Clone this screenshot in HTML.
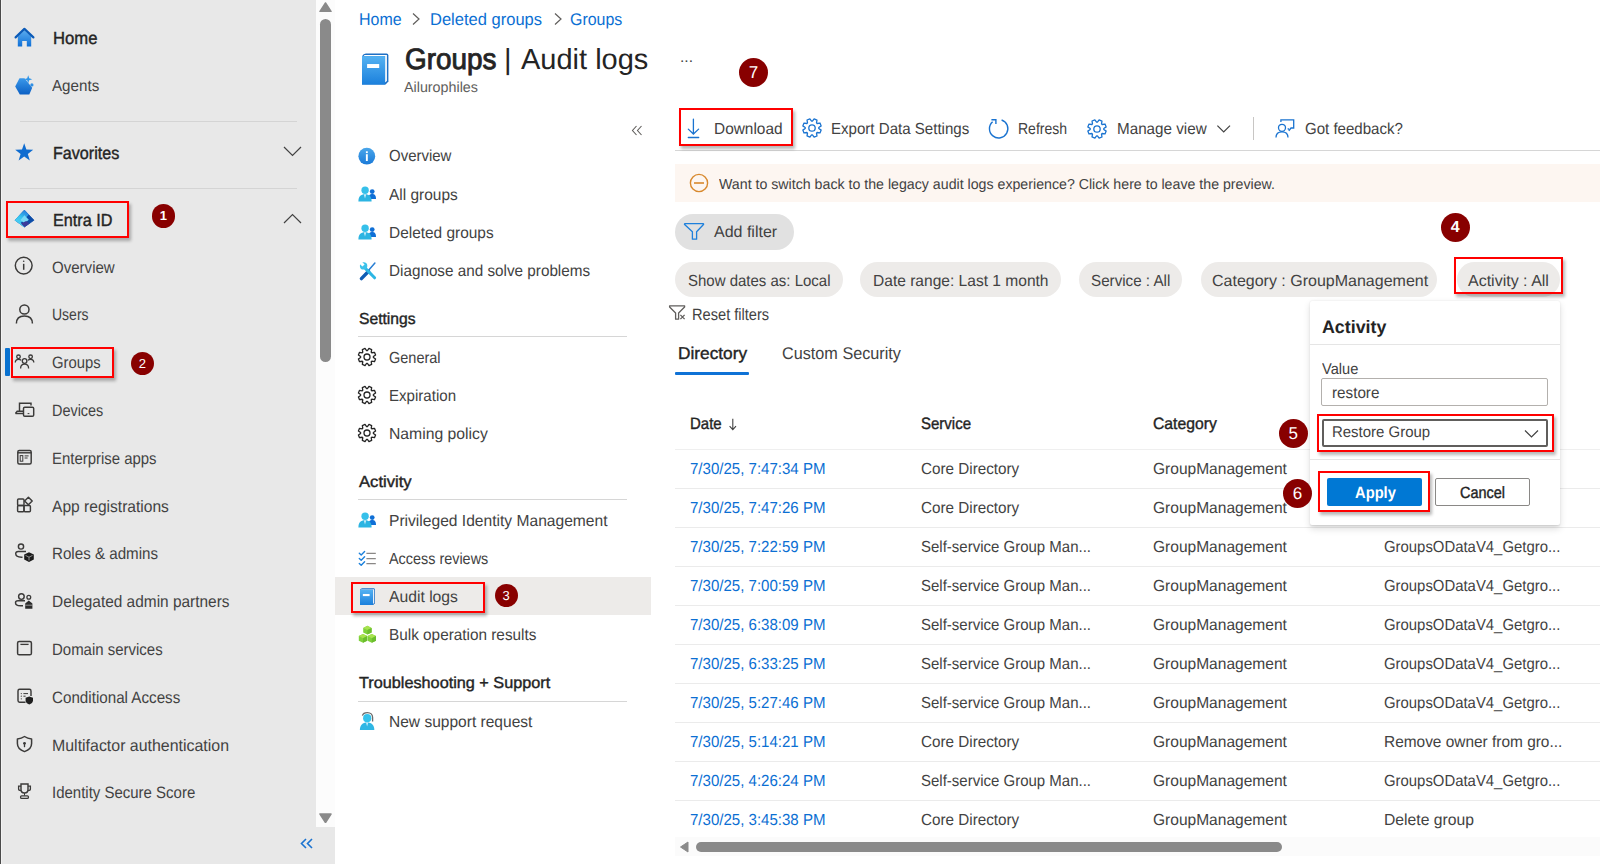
<!DOCTYPE html>
<html><head><meta charset="utf-8"><style>
html,body{margin:0;padding:0;width:1600px;height:864px;overflow:hidden;background:#fff;font-family:"Liberation Sans",sans-serif;text-rendering:geometricPrecision;}
.r{position:absolute;}
.t{position:absolute;white-space:nowrap;line-height:1;transform-origin:0 0;}
.badge{position:absolute;border-radius:50%;background:#880000;color:#fff;text-align:center;font-weight:normal;font-family:"Liberation Sans",sans-serif;}
.redbox{position:absolute;border:2px solid #ff0000;box-sizing:border-box;box-shadow:2px 3px 3px rgba(0,0,0,.28);}
</style></head><body>
<div class="r" style="left:0px;top:0px;width:316px;height:864px;background:#e8e8e8"></div>
<div class="r" style="left:316px;top:0px;width:19px;height:827px;background:#fcfcfc"></div>
<div class="r" style="left:316px;top:827px;width:19px;height:37px;background:#e8e8e8"></div>
<div class="r" style="left:0px;top:0px;width:1px;height:864px;background:#4b4b4b"></div>
<div class="r" style="left:1px;top:0px;width:1px;height:864px;background:#f3f3f3"></div>
<svg class="r" style="left:319px;top:2px" width="13" height="10" viewBox="0 0 13 10"><path d="M6.5 1 L12 9.5 L1 9.5 Z" fill="#8a8a8a" stroke="#8a8a8a" stroke-width="1.5" stroke-linejoin="round"/></svg>
<div class="r" style="left:320px;top:19px;width:11px;height:343px;background:#8a8a8a;border-radius:5.5px"></div>
<svg class="r" style="left:319px;top:813px" width="13" height="10" viewBox="0 0 13 10"><path d="M1 1 L12 1 L6.5 9.5 Z" fill="#8a8a8a" stroke="#8a8a8a" stroke-width="1.5" stroke-linejoin="round"/></svg>
<svg class="r" style="left:300px;top:838px" width="13" height="11" viewBox="0 0 13 11"><path d="M6 1 L1.5 5.5 L6 10 M12 1 L7.5 5.5 L12 10" fill="none" stroke="#1a73d0" stroke-width="1.6"/></svg>
<div class="r" style="left:20px;top:121px;width:277px;height:1px;background:#d4d4d4"></div>
<div class="r" style="left:20px;top:188px;width:277px;height:1px;background:#d4d4d4"></div>
<div class="t" style="left:52.5px;top:30.0px;font-size:17.5px;color:#242424;-webkit-text-stroke:0.4px #242424;transform:scaleX(0.951);">Home</div>
<div class="t" style="left:52.3px;top:79.0px;font-size:16px;color:#424242;transform:scaleX(0.948);">Agents</div>
<div class="t" style="left:52.7px;top:145.0px;font-size:17.5px;color:#242424;-webkit-text-stroke:0.4px #242424;transform:scaleX(0.921);">Favorites</div>
<div class="t" style="left:52.7px;top:212.0px;font-size:17.5px;color:#242424;-webkit-text-stroke:0.4px #242424;transform:scaleX(0.927);">Entra ID</div>
<div class="t" style="left:52.4px;top:260.0px;font-size:16.5px;color:#424242;transform:scaleX(0.912);">Overview</div>
<div class="t" style="left:52.4px;top:307.0px;font-size:16.5px;color:#424242;transform:scaleX(0.849);">Users</div>
<div class="t" style="left:52.4px;top:355.0px;font-size:16.5px;color:#424242;transform:scaleX(0.898);">Groups</div>
<div class="t" style="left:52.4px;top:403.0px;font-size:16.5px;color:#424242;transform:scaleX(0.874);">Devices</div>
<div class="t" style="left:52.4px;top:451.0px;font-size:16.5px;color:#424242;transform:scaleX(0.905);">Enterprise apps</div>
<div class="t" style="left:52.4px;top:499.0px;font-size:16.5px;color:#424242;transform:scaleX(0.944);">App registrations</div>
<div class="t" style="left:52.4px;top:546.0px;font-size:16.5px;color:#424242;transform:scaleX(0.918);">Roles &amp; admins</div>
<div class="t" style="left:52.4px;top:594.0px;font-size:16.5px;color:#424242;transform:scaleX(0.935);">Delegated admin partners</div>
<div class="t" style="left:52.4px;top:642.0px;font-size:16.5px;color:#424242;transform:scaleX(0.907);">Domain services</div>
<div class="t" style="left:52.4px;top:690.0px;font-size:16.5px;color:#424242;transform:scaleX(0.920);">Conditional Access</div>
<div class="t" style="left:52.4px;top:738.0px;font-size:16.5px;color:#424242;transform:scaleX(0.965);">Multifactor authentication</div>
<div class="t" style="left:52.4px;top:785.0px;font-size:16.5px;color:#424242;transform:scaleX(0.908);">Identity Secure Score</div>
<svg class="r" style="left:283px;top:146px" width="19" height="11" viewBox="0 0 19 11"><path d="M1 1 L9.5 9.5 L18 1" fill="none" stroke="#424242" stroke-width="1.2"/></svg>
<svg class="r" style="left:283px;top:213px" width="19" height="11" viewBox="0 0 19 11"><path d="M1 10 L9.5 1.5 L18 10" fill="none" stroke="#424242" stroke-width="1.2"/></svg>
<div class="r" style="left:5px;top:348px;width:5px;height:28px;background:#0a72d0;border-radius:1px"></div>
<div class="r" style="left:335px;top:577px;width:316px;height:38px;background:#edebe9"></div>
<div class="t" style="left:359.4px;top:11.0px;font-size:17px;color:#0b6fd3;transform:scaleX(0.939);">Home</div>
<div class="t" style="left:430.4px;top:11.0px;font-size:17px;color:#0b6fd3;transform:scaleX(0.972);">Deleted groups</div>
<div class="t" style="left:570.3px;top:11.0px;font-size:17px;color:#0b6fd3;transform:scaleX(0.938);">Groups</div>
<svg class="r" style="left:411px;top:12px" width="10" height="14" viewBox="0 0 10 14"><path d="M2 1.5 L8 7 L2 12.5" fill="none" stroke="#605e5c" stroke-width="1.2"/></svg>
<svg class="r" style="left:553px;top:12px" width="10" height="14" viewBox="0 0 10 14"><path d="M2 1.5 L8 7 L2 12.5" fill="none" stroke="#605e5c" stroke-width="1.2"/></svg>
<div class="t" style="left:404.8px;top:45.0px;font-size:29.5px;color:#242424;-webkit-text-stroke:0.9px #242424;transform:scaleX(0.945);">Groups</div>
<div class="t" style="left:504.0px;top:46.0px;font-size:29px;color:#242424;">|</div>
<div class="t" style="left:521.0px;top:46.0px;font-size:29px;color:#242424;">Audit logs</div>
<div class="t" style="left:404.0px;top:81.0px;font-size:14.5px;color:#605e5c;transform:scaleX(0.986);">Ailurophiles</div>
<div class="t" style="left:680.0px;top:50.0px;font-size:15px;color:#424242;transform:scaleX(1.040);">...</div>
<svg class="r" style="left:631px;top:125px" width="12" height="11" viewBox="0 0 12 11"><path d="M5.5 1 L1.5 5.5 L5.5 10 M10.5 1 L6.5 5.5 L10.5 10" fill="none" stroke="#605e5c" stroke-width="1.1"/></svg>
<div class="t" style="left:388.9px;top:149.0px;font-size:16px;color:#424242;transform:scaleX(0.936);">Overview</div>
<div class="t" style="left:388.9px;top:188.0px;font-size:16px;color:#424242;transform:scaleX(0.966);">All groups</div>
<div class="t" style="left:388.9px;top:226.0px;font-size:16px;color:#424242;transform:scaleX(0.964);">Deleted groups</div>
<div class="t" style="left:388.9px;top:264.0px;font-size:16px;color:#424242;transform:scaleX(0.954);">Diagnose and solve problems</div>
<div class="t" style="left:388.9px;top:351.0px;font-size:16px;color:#424242;transform:scaleX(0.906);">General</div>
<div class="t" style="left:388.9px;top:389.0px;font-size:16px;color:#424242;transform:scaleX(0.942);">Expiration</div>
<div class="t" style="left:388.9px;top:427.0px;font-size:16px;color:#424242;transform:scaleX(0.983);">Naming policy</div>
<div class="t" style="left:388.9px;top:514.0px;font-size:16px;color:#424242;transform:scaleX(0.975);">Privileged Identity Management</div>
<div class="t" style="left:388.9px;top:552.0px;font-size:16px;color:#424242;transform:scaleX(0.900);">Access reviews</div>
<div class="t" style="left:388.9px;top:590.0px;font-size:16px;color:#424242;transform:scaleX(0.981);">Audit logs</div>
<div class="t" style="left:388.9px;top:628.0px;font-size:16px;color:#424242;transform:scaleX(0.958);">Bulk operation results</div>
<div class="t" style="left:388.9px;top:715.0px;font-size:16px;color:#424242;transform:scaleX(0.971);">New support request</div>
<div class="t" style="left:358.7px;top:312.0px;font-size:16px;color:#242424;-webkit-text-stroke:0.4px #242424;transform:scaleX(0.979);">Settings</div>
<div class="t" style="left:358.7px;top:475.0px;font-size:16px;color:#242424;-webkit-text-stroke:0.4px #242424;transform:scaleX(1.038);">Activity</div>
<div class="t" style="left:358.7px;top:676.0px;font-size:16px;color:#242424;-webkit-text-stroke:0.4px #242424;transform:scaleX(1.015);">Troubleshooting + Support</div>
<div class="r" style="left:358px;top:336px;width:269px;height:1px;background:#d6d6d6"></div>
<div class="r" style="left:358px;top:499px;width:269px;height:1px;background:#d6d6d6"></div>
<div class="r" style="left:358px;top:701px;width:269px;height:1px;background:#d6d6d6"></div>
<div class="r" style="left:675px;top:150px;width:925px;height:1px;background:#d6d6d6"></div>
<div class="t" style="left:714.3px;top:122.0px;font-size:16px;color:#424242;transform:scaleX(0.963);">Download</div>
<div class="t" style="left:831.3px;top:122.0px;font-size:16px;color:#424242;transform:scaleX(0.942);">Export Data Settings</div>
<div class="t" style="left:1018.4px;top:122.0px;font-size:16px;color:#424242;transform:scaleX(0.876);">Refresh</div>
<div class="t" style="left:1117.2px;top:122.0px;font-size:16px;color:#424242;transform:scaleX(0.951);">Manage view</div>
<div class="t" style="left:1304.6px;top:122.0px;font-size:16px;color:#424242;transform:scaleX(0.940);">Got feedback?</div>
<div class="r" style="left:1253px;top:117px;width:1px;height:23px;background:#c8c6c4"></div>
<div class="r" style="left:675px;top:164px;width:925px;height:38px;background:#fdf6f1"></div>
<div class="t" style="left:719.0px;top:178.0px;font-size:14.5px;color:#424242;transform:scaleX(0.978);">Want to switch back to the legacy audit logs experience? Click here to leave the preview.</div>
<svg class="r" style="left:689px;top:173px" width="20" height="20" viewBox="0 0 20 20"><circle cx="10" cy="10" r="8.6" fill="none" stroke="#d8892e" stroke-width="1.4"/><path d="M5 10 H15" stroke="#d8892e" stroke-width="1.6"/></svg>
<div class="r" style="left:675px;top:214px;width:119px;height:36px;background:#e1e1e1;border-radius:18px"></div>
<div class="t" style="left:714.0px;top:225.0px;font-size:16px;color:#424242;">Add filter</div>
<div class="r" style="left:675px;top:262px;width:168px;height:35px;background:#edebe9;border-radius:17.5px"></div>
<div class="t" style="left:687.6px;top:274.0px;font-size:16px;color:#424242;transform:scaleX(0.937);">Show dates as: Local</div>
<div class="r" style="left:860px;top:262px;width:201px;height:35px;background:#edebe9;border-radius:17.5px"></div>
<div class="t" style="left:873.2px;top:274.0px;font-size:16px;color:#424242;transform:scaleX(0.972);">Date range: Last 1 month</div>
<div class="r" style="left:1079px;top:262px;width:103px;height:35px;background:#edebe9;border-radius:17.5px"></div>
<div class="t" style="left:1090.9px;top:274.0px;font-size:16px;color:#424242;transform:scaleX(0.949);">Service : All</div>
<div class="r" style="left:1201px;top:262px;width:236px;height:35px;background:#edebe9;border-radius:17.5px"></div>
<div class="t" style="left:1212.0px;top:274.0px;font-size:16px;color:#424242;">Category : GroupManagement</div>
<div class="r" style="left:1457px;top:262px;width:103px;height:35px;background:#edebe9;border-radius:17.5px"></div>
<div class="t" style="left:1468.0px;top:274.0px;font-size:16px;color:#424242;">Activity : All</div>
<div class="t" style="left:691.6px;top:307.0px;font-size:16.5px;color:#424242;transform:scaleX(0.886);">Reset filters</div>
<div class="t" style="left:677.5px;top:345.0px;font-size:17px;color:#242424;-webkit-text-stroke:0.4px #242424;transform:scaleX(1.016);">Directory</div>
<div class="t" style="left:781.9px;top:345.0px;font-size:17px;color:#424242;transform:scaleX(0.954);">Custom Security</div>
<div class="r" style="left:675px;top:372px;width:74px;height:3px;background:#0f72d6;border-radius:1px"></div>
<div class="t" style="left:690.3px;top:416.0px;font-size:16.5px;color:#242424;-webkit-text-stroke:0.4px #242424;transform:scaleX(0.907);">Date</div>
<div class="t" style="left:921.3px;top:416.0px;font-size:16.5px;color:#242424;-webkit-text-stroke:0.4px #242424;transform:scaleX(0.909);">Service</div>
<div class="t" style="left:1152.5px;top:416.0px;font-size:16.5px;color:#242424;-webkit-text-stroke:0.4px #242424;transform:scaleX(0.953);">Category</div>
<svg class="r" style="left:726px;top:416px" width="14" height="16" viewBox="0 0 14 16"><path d="M6.8 2.8 V13.6 M3.6 10.2 L6.8 13.6 L10 10.2" fill="none" stroke="#424242" stroke-width="1.1"/></svg>
<div class="r" style="left:675px;top:449px;width:925px;height:1px;background:#efefef"></div>
<div class="t" style="left:690.3px;top:462.0px;font-size:16px;color:#0b6fd3;transform:scaleX(0.940);">7/30/25, 7:47:34 PM</div>
<div class="t" style="left:921.3px;top:462.0px;font-size:16px;color:#424242;transform:scaleX(0.952);">Core Directory</div>
<div class="t" style="left:1152.5px;top:462.0px;font-size:16px;color:#424242;transform:scaleX(0.971);">GroupManagement</div>
<div class="r" style="left:675px;top:488px;width:925px;height:1px;background:#ebebeb"></div>
<div class="t" style="left:690.3px;top:501.0px;font-size:16px;color:#0b6fd3;transform:scaleX(0.940);">7/30/25, 7:47:26 PM</div>
<div class="t" style="left:921.3px;top:501.0px;font-size:16px;color:#424242;transform:scaleX(0.952);">Core Directory</div>
<div class="t" style="left:1152.5px;top:501.0px;font-size:16px;color:#424242;transform:scaleX(0.971);">GroupManagement</div>
<div class="r" style="left:675px;top:527px;width:925px;height:1px;background:#ebebeb"></div>
<div class="t" style="left:690.3px;top:540.0px;font-size:16px;color:#0b6fd3;transform:scaleX(0.940);">7/30/25, 7:22:59 PM</div>
<div class="t" style="left:921.3px;top:540.0px;font-size:16px;color:#424242;transform:scaleX(0.937);">Self-service Group Man...</div>
<div class="t" style="left:1152.5px;top:540.0px;font-size:16px;color:#424242;transform:scaleX(0.971);">GroupManagement</div>
<div class="t" style="left:1383.5px;top:540.0px;font-size:16px;color:#424242;transform:scaleX(0.931);">GroupsODataV4_Getgro...</div>
<div class="r" style="left:675px;top:566px;width:925px;height:1px;background:#ebebeb"></div>
<div class="t" style="left:690.3px;top:579.0px;font-size:16px;color:#0b6fd3;transform:scaleX(0.940);">7/30/25, 7:00:59 PM</div>
<div class="t" style="left:921.3px;top:579.0px;font-size:16px;color:#424242;transform:scaleX(0.937);">Self-service Group Man...</div>
<div class="t" style="left:1152.5px;top:579.0px;font-size:16px;color:#424242;transform:scaleX(0.971);">GroupManagement</div>
<div class="t" style="left:1383.5px;top:579.0px;font-size:16px;color:#424242;transform:scaleX(0.931);">GroupsODataV4_Getgro...</div>
<div class="r" style="left:675px;top:605px;width:925px;height:1px;background:#ebebeb"></div>
<div class="t" style="left:690.3px;top:618.0px;font-size:16px;color:#0b6fd3;transform:scaleX(0.940);">7/30/25, 6:38:09 PM</div>
<div class="t" style="left:921.3px;top:618.0px;font-size:16px;color:#424242;transform:scaleX(0.937);">Self-service Group Man...</div>
<div class="t" style="left:1152.5px;top:618.0px;font-size:16px;color:#424242;transform:scaleX(0.971);">GroupManagement</div>
<div class="t" style="left:1383.5px;top:618.0px;font-size:16px;color:#424242;transform:scaleX(0.931);">GroupsODataV4_Getgro...</div>
<div class="r" style="left:675px;top:644px;width:925px;height:1px;background:#ebebeb"></div>
<div class="t" style="left:690.3px;top:657.0px;font-size:16px;color:#0b6fd3;transform:scaleX(0.940);">7/30/25, 6:33:25 PM</div>
<div class="t" style="left:921.3px;top:657.0px;font-size:16px;color:#424242;transform:scaleX(0.937);">Self-service Group Man...</div>
<div class="t" style="left:1152.5px;top:657.0px;font-size:16px;color:#424242;transform:scaleX(0.971);">GroupManagement</div>
<div class="t" style="left:1383.5px;top:657.0px;font-size:16px;color:#424242;transform:scaleX(0.931);">GroupsODataV4_Getgro...</div>
<div class="r" style="left:675px;top:683px;width:925px;height:1px;background:#ebebeb"></div>
<div class="t" style="left:690.3px;top:696.0px;font-size:16px;color:#0b6fd3;transform:scaleX(0.940);">7/30/25, 5:27:46 PM</div>
<div class="t" style="left:921.3px;top:696.0px;font-size:16px;color:#424242;transform:scaleX(0.937);">Self-service Group Man...</div>
<div class="t" style="left:1152.5px;top:696.0px;font-size:16px;color:#424242;transform:scaleX(0.971);">GroupManagement</div>
<div class="t" style="left:1383.5px;top:696.0px;font-size:16px;color:#424242;transform:scaleX(0.931);">GroupsODataV4_Getgro...</div>
<div class="r" style="left:675px;top:722px;width:925px;height:1px;background:#ebebeb"></div>
<div class="t" style="left:690.3px;top:735.0px;font-size:16px;color:#0b6fd3;transform:scaleX(0.940);">7/30/25, 5:14:21 PM</div>
<div class="t" style="left:921.3px;top:735.0px;font-size:16px;color:#424242;transform:scaleX(0.952);">Core Directory</div>
<div class="t" style="left:1152.5px;top:735.0px;font-size:16px;color:#424242;transform:scaleX(0.971);">GroupManagement</div>
<div class="t" style="left:1383.5px;top:735.0px;font-size:16px;color:#424242;transform:scaleX(0.964);">Remove owner from gro...</div>
<div class="r" style="left:675px;top:761px;width:925px;height:1px;background:#ebebeb"></div>
<div class="t" style="left:690.3px;top:774.0px;font-size:16px;color:#0b6fd3;transform:scaleX(0.940);">7/30/25, 4:26:24 PM</div>
<div class="t" style="left:921.3px;top:774.0px;font-size:16px;color:#424242;transform:scaleX(0.937);">Self-service Group Man...</div>
<div class="t" style="left:1152.5px;top:774.0px;font-size:16px;color:#424242;transform:scaleX(0.971);">GroupManagement</div>
<div class="t" style="left:1383.5px;top:774.0px;font-size:16px;color:#424242;transform:scaleX(0.931);">GroupsODataV4_Getgro...</div>
<div class="r" style="left:675px;top:800px;width:925px;height:1px;background:#ebebeb"></div>
<div class="t" style="left:690.3px;top:813.0px;font-size:16px;color:#0b6fd3;transform:scaleX(0.940);">7/30/25, 3:45:38 PM</div>
<div class="t" style="left:921.3px;top:813.0px;font-size:16px;color:#424242;transform:scaleX(0.952);">Core Directory</div>
<div class="t" style="left:1152.5px;top:813.0px;font-size:16px;color:#424242;transform:scaleX(0.971);">GroupManagement</div>
<div class="t" style="left:1383.5px;top:813.0px;font-size:16px;color:#424242;transform:scaleX(0.981);">Delete group</div>
<div class="r" style="left:675px;top:837px;width:925px;height:19px;background:#fbfbfb"></div>
<svg class="r" style="left:679px;top:841px" width="10" height="12" viewBox="0 0 10 12"><path d="M9 1 L1.5 6 L9 11 Z" fill="#8a8a8a" stroke="#8a8a8a" stroke-width="1" stroke-linejoin="round"/></svg>
<div class="r" style="left:696px;top:842px;width:586px;height:10px;background:#8a8a8a;border-radius:5px"></div>
<div class="r" style="left:1310px;top:301px;width:250px;height:224px;background:#fff;box-shadow:0 3.2px 7.2px rgba(0,0,0,.13),0 0.6px 1.8px rgba(0,0,0,.11);border-radius:2px"></div>
<div class="t" style="left:1322.3px;top:318.0px;font-size:18px;color:#242424;font-weight:bold;transform:scaleX(0.989);">Activity</div>
<div class="r" style="left:1310px;top:344px;width:250px;height:1px;background:#e5e5e5"></div>
<div class="t" style="left:1321.7px;top:362.0px;font-size:15.5px;color:#424242;transform:scaleX(0.943);">Value</div>
<div class="r" style="left:1321px;top:378px;width:227px;height:28px;background:#fff;border:1px solid #b3b0ad;border-radius:2px;box-sizing:border-box"></div>
<div class="t" style="left:1332.0px;top:386.0px;font-size:16px;color:#424242;transform:scaleX(0.952);">restore</div>
<div class="r" style="left:1322px;top:419px;width:226px;height:28px;background:#fff;border:2px solid #605e5c;border-radius:2px;box-sizing:border-box"></div>
<div class="t" style="left:1332.4px;top:425.0px;font-size:15.5px;color:#424242;transform:scaleX(0.965);">Restore Group</div>
<svg class="r" style="left:1524px;top:429px" width="15" height="10" viewBox="0 0 15 10"><path d="M1 1.5 L7.5 8 L14 1.5" fill="none" stroke="#424242" stroke-width="1.2"/></svg>
<div class="r" style="left:1310px;top:459px;width:250px;height:1px;background:#e5e5e5"></div>
<div class="r" style="left:1327px;top:478px;width:95px;height:28px;background:#0078d4;border-radius:2px"></div>
<div class="t" style="left:1354.7px;top:485.0px;font-size:16.25px;color:#ffffff;font-weight:bold;transform:scaleX(0.906);">Apply</div>
<div class="r" style="left:1435px;top:478px;width:95px;height:28px;background:#fff;border:1px solid #8a8886;border-radius:2px;box-sizing:border-box"></div>
<div class="t" style="left:1460.0px;top:485.0px;font-size:16.25px;color:#242424;-webkit-text-stroke:0.4px #242424;transform:scaleX(0.890);">Cancel</div>
<div class="redbox" style="left:6px;top:201px;width:123px;height:37px"></div>
<div class="redbox" style="left:11px;top:347px;width:103px;height:31px"></div>
<div class="redbox" style="left:351px;top:582px;width:134px;height:31px"></div>
<div class="redbox" style="left:679px;top:108px;width:114px;height:38px"></div>
<div class="redbox" style="left:1454px;top:257px;width:109px;height:37px"></div>
<div class="redbox" style="left:1317px;top:414px;width:237px;height:38px"></div>
<div class="redbox" style="left:1318px;top:471px;width:112px;height:41px"></div>
<div class="badge" style="left:151.7px;top:204.1px;width:23.5px;height:23.5px;line-height:23.5px;font-size:13px;font-weight:bold">1</div>
<div class="badge" style="left:130.9px;top:351.7px;width:23px;height:23px;line-height:23px;font-size:13px;font-weight:normal">2</div>
<div class="badge" style="left:494.5px;top:583.9px;width:23.2px;height:23.2px;line-height:23.2px;font-size:13px;font-weight:normal">3</div>
<div class="badge" style="left:1440.8px;top:213.1px;width:29px;height:29px;line-height:29px;font-size:16px;font-weight:bold">4</div>
<div class="badge" style="left:1278.8px;top:419.0px;width:29px;height:29px;line-height:29px;font-size:17px;font-weight:normal">5</div>
<div class="badge" style="left:1282.7px;top:478.9px;width:29.5px;height:29.5px;line-height:29.5px;font-size:17px;font-weight:normal">6</div>
<div class="badge" style="left:739.1px;top:58.2px;width:29px;height:29px;line-height:29px;font-size:17px;font-weight:normal">7</div>
<svg class="r" style="left:10px;top:22px" width="30" height="30" viewBox="10 22 30 30"><defs><linearGradient id="gh" x1="0" y1="0" x2="0" y2="1"><stop offset="0" stop-color="#5aacef"/><stop offset="1" stop-color="#0f6fd6"/></linearGradient></defs><path d="M17.8 36.5 L24.4 30.2 L31.2 36.5 V46.6 H26.8 V41 H22.2 V46.6 H17.8 Z" fill="url(#gh)"/><path d="M15.6 37.4 L24.4 28.9 L33.4 37.4" fill="none" stroke="#0c5bb8" stroke-width="2.2" stroke-linecap="round" stroke-linejoin="round"/></svg>
<svg class="r" style="left:10px;top:70px" width="30" height="30" viewBox="10 70 30 30"><defs><linearGradient id="ga" x1="0" y1="0" x2="0" y2="1"><stop offset="0" stop-color="#3a98ea"/><stop offset="1" stop-color="#0b5fc4"/></linearGradient></defs><path d="M19.5 78.3 L24.5 78.3 L32.2 87.8 L29.3 94.6 L19.8 94.6 L15.2 86.5 Z" fill="url(#ga)"/><path d="M28.2 75.2 L29.2 78.2 L32.2 79.2 L29.2 80.2 L28.2 83.2 L27.2 80.2 L24.2 79.2 L27.2 78.2 Z" fill="#2f95e8"/><circle cx="31.9" cy="84.9" r="1.6" fill="#2f8fe4"/></svg>
<svg class="r" style="left:10px;top:138px" width="30" height="30" viewBox="10 138 30 30"><path d="M24.2 143.2 L26.4 149.6 L33.2 149.8 L27.8 153.9 L29.8 160.6 L24.2 156.6 L18.6 160.6 L20.6 153.9 L15.2 149.8 L22 149.6 Z" fill="#0f6cd0"/></svg>
<svg class="r" style="left:10px;top:203px" width="30" height="30" viewBox="10 203 30 30"><defs><linearGradient id="ge" x1="0.6" y1="0" x2="0.2" y2="0.8"><stop offset="0" stop-color="#2a86e0"/><stop offset="0.5" stop-color="#34c2ee"/><stop offset="1" stop-color="#4fd0f4"/></linearGradient></defs><path d="M24.4 210.2 L34 220.2 L24.4 227 L15 220.2 Z" fill="#0c4ca8" stroke="#0c4ca8" stroke-width="0.8" stroke-linejoin="round"/><path d="M24.4 210.2 L28.5 214.6 L20.5 222.8 L24.4 227 L15 220.2 Z" fill="url(#ge)" stroke="url(#ge)" stroke-width="0.8" stroke-linejoin="round"/><path d="M24.4 215.2 L28.8 219.8 L24.4 223.6 L20.5 220 Z" fill="#78d8f6"/><path d="M21 223.5 L24.4 227 L29.5 223.4 L26.2 221 Z" fill="#3b3a9a"/></svg>
<svg class="r" style="left:10px;top:252px" width="30" height="30" viewBox="10 252 30 30"><circle cx="23.7" cy="265.6" r="8.4" fill="none" stroke="#3b3a39" stroke-width="1.45"/><path d="M23.7 263.8 V269.8" stroke="#3b3a39" stroke-width="1.5"/><circle cx="23.7" cy="261.3" r="0.8" fill="#3b3a39"/></svg>
<svg class="r" style="left:10px;top:300px" width="30" height="30" viewBox="10 300 30 30"><circle cx="24.4" cy="309.5" r="4.6" fill="none" stroke="#3b3a39" stroke-width="1.5"/><path d="M16.4 323.6 C16.4 318 20 316 24.4 316 C28.8 316 32.4 318 32.4 323.6" fill="none" stroke="#3b3a39" stroke-width="1.5"/></svg>
<svg class="r" style="left:10px;top:350px" width="30" height="25" viewBox="10 350 30 25"><circle cx="18.5" cy="356.8" r="1.8" fill="none" stroke="#3b3a39" stroke-width="1.3"/><circle cx="30.6" cy="356.8" r="1.8" fill="none" stroke="#3b3a39" stroke-width="1.3"/><circle cx="24.6" cy="361" r="2.3" fill="none" stroke="#3b3a39" stroke-width="1.3"/><path d="M15.3 362.5 C15.3 360 16.5 359.3 18.5 359.3 C19.8 359.3 20.6 359.6 21.2 360.4" fill="none" stroke="#3b3a39" stroke-width="1.3"/><path d="M33.8 362.5 C33.8 360 32.6 359.3 30.6 359.3 C29.3 359.3 28.5 359.6 27.9 360.4" fill="none" stroke="#3b3a39" stroke-width="1.3"/><path d="M20.6 368.6 C20.6 365.6 22 364.2 24.6 364.2 C27.2 364.2 28.6 365.6 28.6 368.6" fill="none" stroke="#3b3a39" stroke-width="1.3"/></svg>
<svg class="r" style="left:10px;top:398px" width="30" height="22" viewBox="10 398 30 22"><path d="M19.5 411 V403.2 H31 V405.5" fill="none" stroke="#3b3a39" stroke-width="1.45"/><path d="M15.5 413.5 L17.2 411.2 H23" fill="none" stroke="#3b3a39" stroke-width="1.45"/><path d="M15.5 413.5 H23" stroke="#3b3a39" stroke-width="1.45"/><rect x="23.5" y="407.2" width="10.2" height="9" rx="1.3" fill="none" stroke="#3b3a39" stroke-width="1.45"/><path d="M27.6 413.6 H29.4" stroke="#3b3a39" stroke-width="1"/></svg>
<svg class="r" style="left:10px;top:446px" width="30" height="22" viewBox="10 446 30 22"><rect x="17.8" y="450.5" width="13.4" height="13.4" rx="1.5" fill="none" stroke="#3b3a39" stroke-width="1.45"/><path d="M17.8 452.8 H31.2" stroke="#3b3a39" stroke-width="1.45"/><rect x="20.2" y="455.6" width="2.6" height="5.6" fill="none" stroke="#3b3a39" stroke-width="1"/><path d="M24.6 455.9 H28.6 M24.6 458 H27.6" stroke="#3b3a39" stroke-width="1"/></svg>
<svg class="r" style="left:10px;top:492px" width="30" height="24" viewBox="10 492 30 24"><rect x="17.6" y="499" width="6.4" height="6.4" rx="1" fill="none" stroke="#3b3a39" stroke-width="1.45"/><rect x="17.6" y="505.4" width="6.4" height="6.4" rx="1" fill="none" stroke="#3b3a39" stroke-width="1.45"/><rect x="24" y="505.4" width="6.4" height="6.4" rx="1" fill="none" stroke="#3b3a39" stroke-width="1.45"/><path d="M28.4 497.2 L32.2 501 L28.4 504.8 L24.6 501 Z" fill="none" stroke="#3b3a39" stroke-width="1.45" stroke-linejoin="round"/></svg>
<svg class="r" style="left:10px;top:538px" width="30" height="28" viewBox="10 538 30 28"><circle cx="21" cy="546.5" r="2.6" fill="none" stroke="#3b3a39" stroke-width="1.45"/><path d="M26 551.5 H18.2 C16.5 551.5 15.7 552.4 15.7 553.6 C15.7 555.6 17.6 557.2 21.5 557.2 H22.5" fill="none" stroke="#3b3a39" stroke-width="1.45"/><path d="M29 552.2 L33.8 554.6 V559.6 L29 562 L24.2 559.6 V554.6 Z" fill="#1b1b1b"/><path d="M25.5 555.4 L29 557.2 L32.5 555.4 M29 557.2 V560.5" stroke="#ddd" stroke-width="0.6" fill="none"/></svg>
<svg class="r" style="left:10px;top:588px" width="30" height="26" viewBox="10 588 30 26"><circle cx="21.4" cy="596.6" r="2.8" fill="none" stroke="#3b3a39" stroke-width="1.45"/><path d="M25 600.8 H18 C16.5 600.8 15.5 601.6 15.5 602.8 C15.5 604.6 17.3 605.8 20.5 605.8 H23" fill="none" stroke="#3b3a39" stroke-width="1.45"/><circle cx="28.8" cy="597.2" r="1.9" fill="none" stroke="#3b3a39" stroke-width="1.3"/><path d="M25.2 608.8 V603.5 L28.8 600.5 L32.4 603.5 V608.8 Z" fill="#2b2b2b"/><path d="M25.3 605.2 H32.3" stroke="#ddd" stroke-width="0.6"/></svg>
<svg class="r" style="left:10px;top:636px" width="30" height="24" viewBox="10 636 30 24"><rect x="17.6" y="641.4" width="13.8" height="13.4" rx="1.6" fill="none" stroke="#3b3a39" stroke-width="1.5"/><path d="M20.4 644.4 H28.6" stroke="#3b3a39" stroke-width="1.3"/></svg>
<svg class="r" style="left:10px;top:684px" width="30" height="24" viewBox="10 684 30 24"><path d="M25.5 702.2 H19.6 C18.7 702.2 18 701.5 18 700.6 V690.9 C18 690 18.7 689.3 19.6 689.3 H29.4 C30.3 689.3 31 690 31 690.9 V696" fill="none" stroke="#3b3a39" stroke-width="1.45"/><circle cx="21.3" cy="693.6" r="0.6" fill="#3b3a39"/><circle cx="21.3" cy="696.2" r="0.6" fill="#3b3a39"/><circle cx="21.3" cy="698.8" r="0.6" fill="#3b3a39"/><path d="M23.4 693.6 H28 M23.4 696.2 H25.6" stroke="#3b3a39" stroke-width="1"/><path d="M29.3 696.6 L33 697.8 V700.6 C33 702.6 31.4 703.9 29.3 704.6 C27.2 703.9 25.6 702.6 25.6 700.6 V697.8 Z" fill="#1f1f1f"/></svg>
<svg class="r" style="left:10px;top:732px" width="30" height="24" viewBox="10 732 30 24"><path d="M24.5 736.5 C26.5 738 29 738.8 31.6 738.9 V743.5 C31.6 747.6 28.8 750.2 24.5 751.6 C20.2 750.2 17.4 747.6 17.4 743.5 V738.9 C20 738.8 22.5 738 24.5 736.5 Z" fill="none" stroke="#3b3a39" stroke-width="1.5" stroke-linejoin="round"/><circle cx="24.5" cy="743.3" r="1.4" fill="#3b3a39"/><path d="M24.5 743.5 V747.2" stroke="#3b3a39" stroke-width="1.3"/></svg>
<svg class="r" style="left:10px;top:780px" width="30" height="22" viewBox="10 780 30 22"><path d="M21 784 H28 V789.5 C28 791.6 26.5 793 24.5 793 C22.5 793 21 791.6 21 789.5 Z" fill="none" stroke="#3b3a39" stroke-width="1.45"/><path d="M21 786.1 H18.6 V789 C18.6 790 19.5 790.6 21.1 790.6 M28 786.1 H30.4 V789 C30.4 790 29.5 790.6 27.9 790.6" fill="none" stroke="#3b3a39" stroke-width="1.3"/><path d="M24.5 793 V795.5" stroke="#3b3a39" stroke-width="1"/><rect x="20.6" y="795.8" width="7.8" height="2.6" rx="1" fill="none" stroke="#3b3a39" stroke-width="1.3"/></svg>
<svg class="r" style="left:362.1px;top:52.9px" width="26.5" height="31.8" viewBox="0 0 26.5 32" preserveAspectRatio="none"><defs><linearGradient id="gb36252" x1="0" y1="0" x2="0" y2="1"><stop offset="0" stop-color="#55b2f2"/><stop offset="1" stop-color="#1b80dc"/></linearGradient></defs><path d="M0 3.2 Q1.2 0.4 4 0.4 H24.6 Q26.4 0.4 26.4 2.4 V28.6 L23.6 31.8 H0 Z" fill="#1e6fc4"/><path d="M2.6 2.1 H24.9 V28.2 L23.1 29.8 V3.1 H1.6 Z" fill="#fff"/><rect x="0" y="3.1" width="23.1" height="28.7" fill="url(#gb36252)"/><rect x="5.1" y="11.1" width="12.1" height="4" fill="#fff"/></svg>
<svg class="r" style="left:360px;top:588.2px" width="14.8" height="17.2" viewBox="0 0 26.5 32" preserveAspectRatio="none"><defs><linearGradient id="gb360588" x1="0" y1="0" x2="0" y2="1"><stop offset="0" stop-color="#55b2f2"/><stop offset="1" stop-color="#1b80dc"/></linearGradient></defs><path d="M0 3.2 Q1.2 0.4 4 0.4 H24.6 Q26.4 0.4 26.4 2.4 V28.6 L23.6 31.8 H0 Z" fill="#1e6fc4"/><path d="M2.6 2.1 H24.9 V28.2 L23.1 29.8 V3.1 H1.6 Z" fill="#fff"/><rect x="0" y="3.1" width="23.1" height="28.7" fill="url(#gb360588)"/><rect x="5.1" y="11.1" width="12.1" height="4" fill="#fff"/></svg>
<svg class="r" style="left:354px;top:142px" width="30" height="30" viewBox="354 142 30 30"><defs><linearGradient id="gi" x1="0" y1="0" x2="0" y2="1"><stop offset="0" stop-color="#4aa6ea"/><stop offset="1" stop-color="#1a7ad8"/></linearGradient></defs><circle cx="366.8" cy="156.2" r="8.4" fill="url(#gi)"/><rect x="365.9" y="154.2" width="1.9" height="6.8" fill="#fff"/><rect x="365.9" y="151.3" width="1.9" height="1.8" fill="#fff"/></svg>
<svg class="r" style="left:354px;top:180px" width="30" height="30" viewBox="354 180 30 30"><circle cx="372.2" cy="191.6" r="2.4" fill="#0f6fd6"/><path d="M368.5 198.9 C368.5 195 370 194 372.2 194 C374.5 194 376 195.2 376 198.9 Z" fill="#0f6fd6"/><circle cx="365.1" cy="190.2" r="3.7" fill="#36c0ea"/><path d="M358.4 201.4 C358.4 196.5 360.6 194.2 365 194.2 C369.4 194.2 371.6 196.5 371.6 201.4 Z" fill="#2cb4e2"/><path d="M364 194.6 L365 198.5 L366 194.6 Z" fill="#e8f8ff"/></svg>
<svg class="r" style="left:354px;top:218.2px" width="30" height="30" viewBox="354 180 30 30"><circle cx="372.2" cy="191.6" r="2.4" fill="#0f6fd6"/><path d="M368.5 198.9 C368.5 195 370 194 372.2 194 C374.5 194 376 195.2 376 198.9 Z" fill="#0f6fd6"/><circle cx="365.1" cy="190.2" r="3.7" fill="#36c0ea"/><path d="M358.4 201.4 C358.4 196.5 360.6 194.2 365 194.2 C369.4 194.2 371.6 196.5 371.6 201.4 Z" fill="#2cb4e2"/><path d="M364 194.6 L365 198.5 L366 194.6 Z" fill="#e8f8ff"/></svg>
<svg class="r" style="left:354px;top:506px" width="30" height="30" viewBox="354 180 30 30"><circle cx="372.2" cy="191.6" r="2.4" fill="#0f6fd6"/><path d="M368.5 198.9 C368.5 195 370 194 372.2 194 C374.5 194 376 195.2 376 198.9 Z" fill="#0f6fd6"/><circle cx="365.1" cy="190.2" r="3.7" fill="#36c0ea"/><path d="M358.4 201.4 C358.4 196.5 360.6 194.2 365 194.2 C369.4 194.2 371.6 196.5 371.6 201.4 Z" fill="#2cb4e2"/><path d="M364 194.6 L365 198.5 L366 194.6 Z" fill="#e8f8ff"/></svg>
<svg class="r" style="left:354px;top:255px" width="30" height="30" viewBox="354 255 30 30"><path d="M368.4 270.6 L374.9 263" stroke="#2a7fd4" stroke-width="1.5" stroke-linecap="round"/><path d="M361.4 278.6 L368.6 271.2" stroke="#0f5cb4" stroke-width="3.4" stroke-linecap="round"/><path d="M374.6 277.8 L365.6 268.6" stroke="#2cb6e4" stroke-width="3" stroke-linecap="round"/><circle cx="363.6" cy="265.9" r="3.7" fill="#3cc2ea"/><path d="M359.2 263.4 L362.4 266.6 L364.6 264.4 L361.4 261.2 Z" fill="#fff"/></svg>
<svg class="r" style="left:355.4px;top:345.1px" width="24" height="24" viewBox="-12 -12 24 24"><g transform="rotate(22.5)"><path d="M6.05 -2.07 L8.68 -1.44 L8.68 1.44 L6.05 2.07 L5.75 2.82 L7.16 5.12 L5.12 7.16 L2.82 5.75 L2.07 6.05 L1.44 8.68 L-1.44 8.68 L-2.07 6.05 L-2.82 5.75 L-5.12 7.16 L-7.16 5.12 L-5.75 2.82 L-6.05 2.07 L-8.68 1.44 L-8.68 -1.44 L-6.05 -2.07 L-5.75 -2.82 L-7.16 -5.12 L-5.12 -7.16 L-2.82 -5.75 L-2.07 -6.05 L-1.44 -8.68 L1.44 -8.68 L2.07 -6.05 L2.82 -5.75 L5.12 -7.16 L7.16 -5.12 L5.75 -2.82Z" fill="none" stroke="#242424" stroke-width="1.3" stroke-linejoin="round"/></g><circle cx="0" cy="0" r="3.0" fill="none" stroke="#242424" stroke-width="1.3"/></svg>
<svg class="r" style="left:355.4px;top:383.2px" width="24" height="24" viewBox="-12 -12 24 24"><g transform="rotate(22.5)"><path d="M6.05 -2.07 L8.68 -1.44 L8.68 1.44 L6.05 2.07 L5.75 2.82 L7.16 5.12 L5.12 7.16 L2.82 5.75 L2.07 6.05 L1.44 8.68 L-1.44 8.68 L-2.07 6.05 L-2.82 5.75 L-5.12 7.16 L-7.16 5.12 L-5.75 2.82 L-6.05 2.07 L-8.68 1.44 L-8.68 -1.44 L-6.05 -2.07 L-5.75 -2.82 L-7.16 -5.12 L-5.12 -7.16 L-2.82 -5.75 L-2.07 -6.05 L-1.44 -8.68 L1.44 -8.68 L2.07 -6.05 L2.82 -5.75 L5.12 -7.16 L7.16 -5.12 L5.75 -2.82Z" fill="none" stroke="#242424" stroke-width="1.3" stroke-linejoin="round"/></g><circle cx="0" cy="0" r="3.0" fill="none" stroke="#242424" stroke-width="1.3"/></svg>
<svg class="r" style="left:355.4px;top:421.3px" width="24" height="24" viewBox="-12 -12 24 24"><g transform="rotate(22.5)"><path d="M6.05 -2.07 L8.68 -1.44 L8.68 1.44 L6.05 2.07 L5.75 2.82 L7.16 5.12 L5.12 7.16 L2.82 5.75 L2.07 6.05 L1.44 8.68 L-1.44 8.68 L-2.07 6.05 L-2.82 5.75 L-5.12 7.16 L-7.16 5.12 L-5.75 2.82 L-6.05 2.07 L-8.68 1.44 L-8.68 -1.44 L-6.05 -2.07 L-5.75 -2.82 L-7.16 -5.12 L-5.12 -7.16 L-2.82 -5.75 L-2.07 -6.05 L-1.44 -8.68 L1.44 -8.68 L2.07 -6.05 L2.82 -5.75 L5.12 -7.16 L7.16 -5.12 L5.75 -2.82Z" fill="none" stroke="#242424" stroke-width="1.3" stroke-linejoin="round"/></g><circle cx="0" cy="0" r="3.0" fill="none" stroke="#242424" stroke-width="1.3"/></svg>
<svg class="r" style="left:354px;top:540px" width="30" height="30" viewBox="354 540 30 30"><path d="M359.3 553.3 L361.2 555.1 L364.6 551.6 M359.3 558.5 L361.2 560.3 L364.6 556.8 M359.3 563.5 L361.2 565.3 L364.6 561.8" fill="none" stroke="#1e82dc" stroke-width="1.4" stroke-linecap="round" stroke-linejoin="round"/><path d="M366.4 553.4 H375.8 M366.4 558.6 H375.8 M366.4 563.6 H375.8" stroke="#8a8886" stroke-width="1.4"/></svg>
<svg class="r" style="left:354px;top:620px" width="30" height="30" viewBox="354 620 30 30"><path d="M363.2 627.8900000000001 L367.4 625.7900000000001 L371.59999999999997 627.8900000000001 V632.51 L367.4 634.61 L363.2 632.51 Z" fill="#7fd13b"/><path d="M363.2 627.8900000000001 L367.4 625.7900000000001 L371.59999999999997 627.8900000000001 L367.4 629.99 Z" fill="#a8e34f"/><path d="M367.4 629.99 L371.59999999999997 627.8900000000001 V632.51 L367.4 634.61 Z" fill="#6cbd2e"/><path d="M358.8 636.09 L363 633.99 L367.2 636.09 V640.7099999999999 L363 642.81 L358.8 640.7099999999999 Z" fill="#7fd13b"/><path d="M358.8 636.09 L363 633.99 L367.2 636.09 L363 638.1899999999999 Z" fill="#a8e34f"/><path d="M363 638.1899999999999 L367.2 636.09 V640.7099999999999 L363 642.81 Z" fill="#6cbd2e"/><path d="M367.6 636.09 L371.8 633.99 L376.0 636.09 V640.7099999999999 L371.8 642.81 L367.6 640.7099999999999 Z" fill="#7fd13b"/><path d="M367.6 636.09 L371.8 633.99 L376.0 636.09 L371.8 638.1899999999999 Z" fill="#a8e34f"/><path d="M371.8 638.1899999999999 L376.0 636.09 V640.7099999999999 L371.8 642.81 Z" fill="#6cbd2e"/></svg>
<svg class="r" style="left:354px;top:706px" width="30" height="30" viewBox="354 706 30 30"><path d="M362.4 715.6 C363 713.4 365 712.6 367.4 712.6 C370.6 712.6 372.6 714.8 372.6 717.6 V721.4" fill="none" stroke="#6b6b6b" stroke-width="1.3"/><circle cx="367.2" cy="718.2" r="4.1" fill="#34c3ec"/><path d="M359.9 730 C359.9 725 362.5 722.5 367.1 722.5 C371.7 722.5 374.3 725 374.3 730 Z" fill="#2fb6e4"/><path d="M366.2 722.8 L367.1 726.5 L368 722.8 Z" fill="#e4f7ff"/></svg>
<svg class="r" style="left:680px;top:112px" width="30" height="30" viewBox="680 112 30 30"><path d="M693.4 119.1 V133.3 M688.3 129.1 L693.4 134 L698.6 129.1 M688.3 137.5 H698.7" fill="none" stroke="#1a73d0" stroke-width="1.3" stroke-linecap="round"/></svg>
<svg class="r" style="left:799.6px;top:116.30000000000001px" width="24" height="24" viewBox="-12 -12 24 24"><g transform="rotate(22.5)"><path d="M6.43 -2.20 L9.27 -1.54 L9.27 1.54 L6.43 2.20 L6.11 2.99 L7.65 5.47 L5.47 7.65 L2.99 6.11 L2.20 6.43 L1.54 9.27 L-1.54 9.27 L-2.20 6.43 L-2.99 6.11 L-5.47 7.65 L-7.65 5.47 L-6.11 2.99 L-6.43 2.20 L-9.27 1.54 L-9.27 -1.54 L-6.43 -2.20 L-6.11 -2.99 L-7.65 -5.47 L-5.47 -7.65 L-2.99 -6.11 L-2.20 -6.43 L-1.54 -9.27 L1.54 -9.27 L2.20 -6.43 L2.99 -6.11 L5.47 -7.65 L7.65 -5.47 L6.11 -2.99Z" fill="none" stroke="#1a73d0" stroke-width="1.3" stroke-linejoin="round"/></g><circle cx="0" cy="0" r="3.2" fill="none" stroke="#1a73d0" stroke-width="1.3"/></svg>
<svg class="r" style="left:1085.2px;top:116.69999999999999px" width="24" height="24" viewBox="-12 -12 24 24"><g transform="rotate(22.5)"><path d="M6.43 -2.20 L9.27 -1.54 L9.27 1.54 L6.43 2.20 L6.11 2.99 L7.65 5.47 L5.47 7.65 L2.99 6.11 L2.20 6.43 L1.54 9.27 L-1.54 9.27 L-2.20 6.43 L-2.99 6.11 L-5.47 7.65 L-7.65 5.47 L-6.11 2.99 L-6.43 2.20 L-9.27 1.54 L-9.27 -1.54 L-6.43 -2.20 L-6.11 -2.99 L-7.65 -5.47 L-5.47 -7.65 L-2.99 -6.11 L-2.20 -6.43 L-1.54 -9.27 L1.54 -9.27 L2.20 -6.43 L2.99 -6.11 L5.47 -7.65 L7.65 -5.47 L6.11 -2.99Z" fill="none" stroke="#1a73d0" stroke-width="1.3" stroke-linejoin="round"/></g><circle cx="0" cy="0" r="3.2" fill="none" stroke="#1a73d0" stroke-width="1.3"/></svg>
<svg class="r" style="left:980px;top:112px" width="30" height="30" viewBox="980 112 30 30"><path d="M1001.6 120 A9.2 9.2 0 1 1 992.6 121.8" fill="none" stroke="#1a73d0" stroke-width="1.4"/><path d="M991.4 119.8 H995.9 V123.9" fill="none" stroke="#1a73d0" stroke-width="1.4"/></svg>
<svg class="r" style="left:1270px;top:112px" width="30" height="30" viewBox="1270 112 30 30"><path d="M1280.9 122 V119.9 H1293.7 V128 H1291 L1288.8 130.8" fill="none" stroke="#1a73d0" stroke-width="1.3"/><path d="M1287.7 128.4 L1289 129.6" stroke="#1a73d0" stroke-width="1.3"/><circle cx="1282" cy="127.8" r="3.5" fill="none" stroke="#1a73d0" stroke-width="1.3"/><path d="M1276 137.6 C1276 133.8 1278.4 131.8 1282 131.8 C1285.6 131.8 1288 133.8 1288 137.6" fill="none" stroke="#1a73d0" stroke-width="1.3"/></svg>
<svg class="r" style="left:1214px;top:122px" width="20" height="14" viewBox="1214 122 20 14"><path d="M1217.4 125.6 L1223.7 132 L1230 125.6" fill="none" stroke="#424242" stroke-width="1.2"/></svg>
<svg class="r" style="left:680px;top:218px" width="28" height="26" viewBox="680 218 28 26"><path d="M684.9 223.6 H703.2 C703.6 223.6 703.8 224.2 703.5 224.5 L696.6 231.8 V239.2 H692.4 V231.8 L684.6 224.5 C684.3 224.2 684.5 223.6 684.9 223.6 Z" fill="none" stroke="#1e80dc" stroke-width="1.3" stroke-linejoin="round"/></svg>
<svg class="r" style="left:664px;top:300px" width="28" height="26" viewBox="664 300 28 26"><path d="M669.6 305.8 H684.6 V307 L678.6 313 V319.2 H675.6 V313 L669.6 307 Z" fill="none" stroke="#605e5c" stroke-width="1.3" stroke-linejoin="round"/><path d="M680.4 314.9 L684.6 319.1 M684.6 314.9 L680.4 319.1" stroke="#605e5c" stroke-width="1.3"/></svg>
</body></html>
